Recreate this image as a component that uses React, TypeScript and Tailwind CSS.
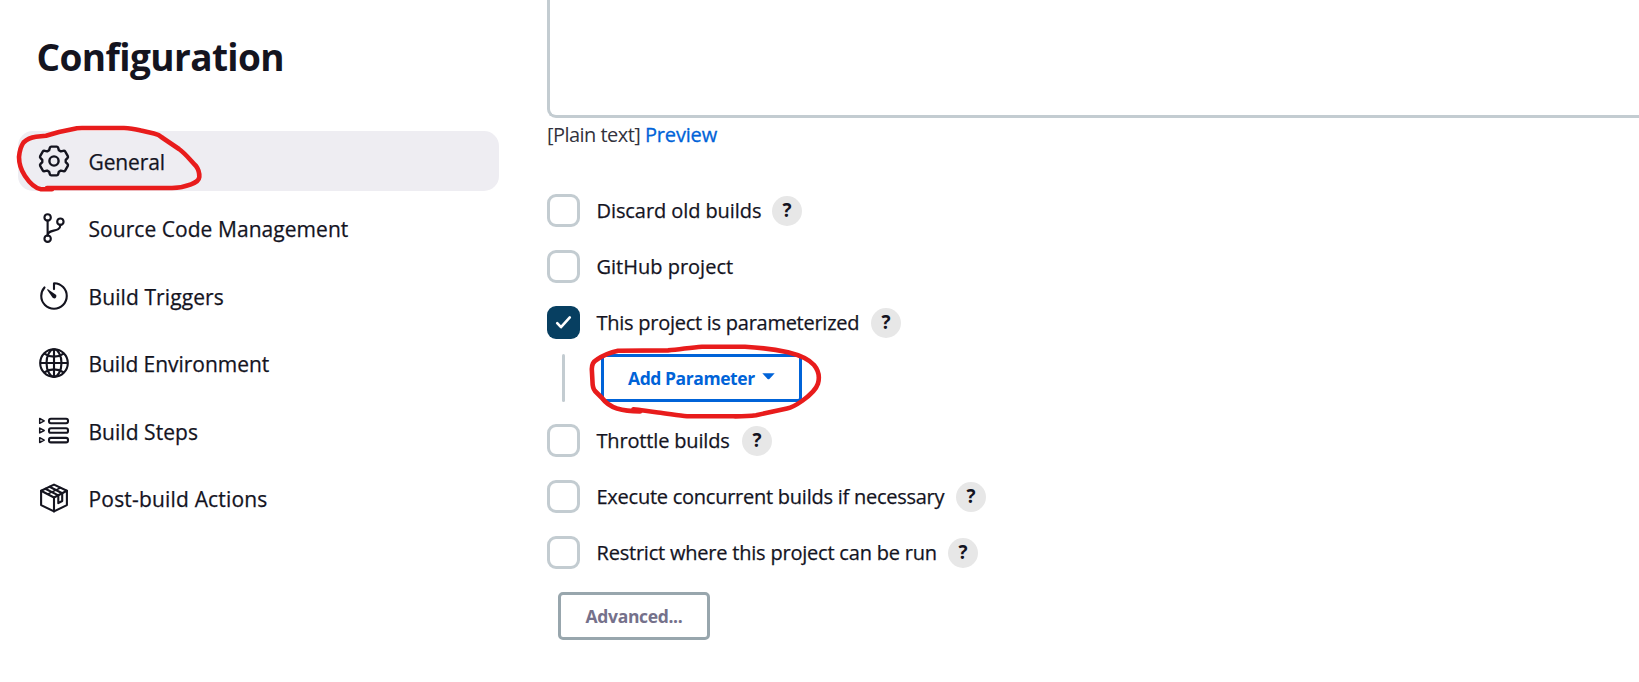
import React from "react";
import { IoGitBranchOutline, IoGlobeOutline, IoTimerOutline } from "react-icons/io5";

const LOBES = [0, 60, 120, 180, 240, 300];

function lobePoint(x: number, y: number, deg: number) {
  const a = (deg * Math.PI) / 180;
  const px = 17 + x * Math.cos(a) - y * Math.sin(a);
  const py = 17 + x * Math.sin(a) + y * Math.cos(a);
  return `${px.toFixed(2)} ${py.toFixed(2)}`;
}

const GEAR =
  LOBES.map((d, i) => {
    const p = (x: number, y: number) => lobePoint(x, y, d);
    return `${i === 0 ? "M" : "L"}${p(-4.9, -10.7)}L${p(-4.2, -13.1)}Q${p(-3.8, -14.4)} ${p(-2.7, -14.4)}L${p(2.7, -14.4)}Q${p(3.8, -14.4)} ${p(4.2, -13.1)}L${p(4.9, -10.7)}`;
  }).join("") + "Z";

const stroke = {
  fill: "none",
  stroke: "currentColor",
  strokeLinecap: "round" as const,
  strokeLinejoin: "round" as const,
};

function GearIcon() {
  return (
    <svg viewBox="0 0 34 34" className="size-[34px]" {...stroke} strokeWidth={2.4}>
      <path d={GEAR} />
      <circle cx="17" cy="17" r="4.6" />
    </svg>
  );
}

function StepsIcon() {
  return (
    <svg viewBox="0 0 34 34" className="size-[34px]" {...stroke}>
      {[6.9, 16.5, 26.1].map((y) => (
        <g key={y}>
          <path d={`M2.7 ${y - 2.4}L7.2 ${y}L2.7 ${y + 2.4}Z`} strokeWidth={1.5} />
          <rect x="12" y={y - 2.2} width="19" height="4.5" rx="1.9" strokeWidth={2.1} />
        </g>
      ))}
    </svg>
  );
}

function PackageIcon() {
  return (
    <svg viewBox="0 0 34 34" className="size-[34px]" {...stroke} strokeWidth={2.1}>
      <path d="M17 3.6L29.9 9.800V24.100L17 30.400L4.100 24.100V9.800Z" />
      <path d="M4.1 9.8L17 16.5L29.9 9.8M17 16.5V30.4" />
      <path d="M8.3 7.8L21.300 14.400V22.200L25.200 20V12.300L12.600 5.800" />
      <path d="M10.6 13.1L23.600 6.700" strokeWidth={1.6} />
    </svg>
  );
}

const NAV = [
  { label: "General", icon: <GearIcon />, tracking: "tracking-[-0.13px]", active: true },
  { label: "Source Code Management", icon: <IoGitBranchOutline size={34} />, tracking: "tracking-[0.05px]" },
  { label: "Build Triggers", icon: <IoTimerOutline size={34} />, tracking: "tracking-[0.1px]" },
  { label: "Build Environment", icon: <IoGlobeOutline size={34} />, tracking: "tracking-[-0.04px]" },
  { label: "Build Steps", icon: <StepsIcon />, tracking: "tracking-[0.04px]" },
  { label: "Post-build Actions", icon: <PackageIcon />, tracking: "tracking-[0.18px]" },
];

function Help() {
  return (
    <button className="flex size-[30px] shrink-0 items-center justify-center rounded-full bg-[#e7e7e7] pb-px text-[19px] leading-none font-bold">
      ?
    </button>
  );
}

interface OptionProps {
  label: string;
  text: string;
  checked?: boolean;
  help?: boolean;
}

function Option({ label, text, checked = false, help = true }: OptionProps) {
  return (
    <div className="flex h-[33px] items-center">
      <span
        className={
          checked
            ? "size-[33px] shrink-0 rounded-[9px] bg-[#073f61]"
            : "size-[33px] shrink-0 rounded-[9px] border-3 border-[#c3ccd1] bg-white"
        }
      >
        {checked && (
          <svg viewBox="0 0 33 33" className="size-[33px]" fill="none" stroke="white" strokeWidth="2.6" strokeLinecap="round" strokeLinejoin="round">
            <path d="M10.2 17.1L14 21.2L22.800 11.400" />
          </svg>
        )}
      </span>
      <span className={`ml-[16.5px] shrink-0 pt-px text-[20px] leading-7 whitespace-nowrap [-webkit-text-stroke:0.25px] ${text}`}>{label}</span>
      {help && <Help />}
    </div>
  );
}

function Annotations() {
  return (
    <svg viewBox="0 0 1639 682" className="pointer-events-none absolute top-0 left-0 h-[682px] w-[1639px]" fill="none" stroke="#e81c1c" strokeWidth="4.6" strokeLinecap="round" strokeLinejoin="round">
      <path d="M52 189.3H41C34 188 29 182 25 176C21 170 19 165 19 157C19.500 151 21 146 23.500 142.500C27 139 31 137.300 36 136.700L46 135.700L59 132L77 128.200Q79 128 82 128H124C131 128 136 129.300 141 130.600L154 133.500Q159 134.500 162 137.500L179 149C186 154 191 161 196 166C199 170 199.500 173 199.300 177C199 180.500 196 182.500 191 184.300C184 187 179 187.800 172 188H47" />
      <path d="M640 411.500C632 411.300 624 410.500 617 408.500C609 406 605 402 602 398L595 391C592.500 388 592.500 386 592.500 382L591.800 369C592 364 593 362 597 359.500C603 355.500 611 352.300 618 350.800L668 350.400C680 349.500 690 347.500 702 346.700H745C758 347.500 775 349.500 788 352.300C799 355 809 359.500 814 365C819 371 819.500 378 818 383.500C816 390 809 396 802 401C797 404.500 792 407.500 787 408.600L756 415.200C746 416.700 738 416.300 728 416.300H687C679 415.800 669 413.800 658 412.500C648 411.500 641 409.800 633.500 409.300" />
    </svg>
  );
}

export default function App() {
  return (
    <div className="relative flex h-[682px] w-full overflow-hidden bg-white font-['Open_Sans','Noto_Sans',sans-serif] text-[#14141f]">
      <aside className="w-[547px] shrink-0 pt-8 pl-[18px]">
        <h1 className="pl-[18.5px] text-[37px] leading-[50px] font-bold tracking-[-0.6px]">Configuration</h1>
        <nav className="mt-[49px] flex w-[481px] flex-col gap-[7.4px]">
          {NAV.map((item) => (
            <a
              key={item.label}
              className={`flex h-[60px] items-center gap-[17.5px] rounded-[15px] pl-[19px] ${item.active ? "bg-[#eeedf2]" : ""}`}
            >
              {item.icon}
              <span className={`pt-0.5 text-[21px] leading-7 [-webkit-text-stroke:0.25px] ${item.tracking}`}>{item.label}</span>
            </a>
          ))}
        </nav>
      </aside>

      <main className="flex min-w-0 flex-1 flex-col">
        <div className="-mr-4 h-[118px] shrink-0 rounded-bl-[9px] border-b-3 border-l-3 border-[#c3ccd1]" />
        <div className="flex h-[34px] text-[20px] leading-[33px] whitespace-nowrap">
          <span className="w-[98px] tracking-[-0.54px] text-[#33333d]">[Plain text]</span>
          <a className="tracking-[-0.17px] text-[#0063d8] [-webkit-text-stroke:0.3px]">Preview</a>
        </div>

        <div className="mt-[42px] flex flex-col gap-[23px]">
          <Option label="Discard old builds" text="w-[175.5px] tracking-[-0.08px]" />
          <Option label="GitHub project" text="w-[149.5px]" help={false} />
          <Option label="This project is parameterized" text="w-[274.5px] tracking-[-0.26px]" checked />
        </div>

        <div className="mt-[15px] flex h-12 pl-[15px]">
          <span className="w-[3px] rounded-full bg-[#c3ccd1]" />
          <button className="ml-9 flex w-[201px] items-center rounded-[4px] border-3 border-[#0063d8] pl-6 text-[17.5px] font-bold tracking-[-0.43px] whitespace-nowrap text-[#0063d8]">
            <span className="w-[134px] text-left">Add Parameter</span>
            <svg viewBox="0 0 13 7" className="mb-[3px] h-[7px] w-[13px]" fill="currentColor">
              <path d="M0.300 0.300H12.700L7.400 5.900Q6.500 6.700 5.600 5.900Z" />
            </svg>
          </button>
        </div>

        <div className="mt-[22px] flex flex-col gap-[23px]">
          <Option label="Throttle builds" text="w-[145.5px] tracking-[-0.16px]" />
          <Option label="Execute concurrent builds if necessary" text="w-[359.5px] tracking-[-0.25px]" />
          <Option label="Restrict where this project can be run" text="w-[351.5px] tracking-[-0.21px]" />
        </div>

        <button className="mt-[23px] ml-[11px] h-12 w-[152px] rounded-[5px] border-3 border-[#98a6ad] text-[17.5px] font-bold tracking-[-0.34px] text-[#75718b]">
          Advanced...
        </button>
      </main>

      <Annotations />
    </div>
  );
}
